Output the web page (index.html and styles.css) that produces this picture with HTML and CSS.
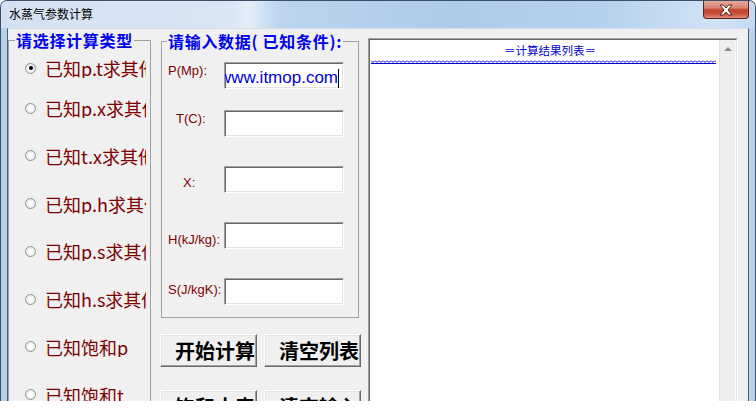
FILE: index.html
```html
<!DOCTYPE html>
<html>
<head lang="zh">
    <meta charset="UTF-8">
    <title>水蒸气参数计算</title>
    <link rel="stylesheet" href="styles.css">
</head>
<body>
<div class="window">
    <div class="titlebar">
        <span class="title">水蒸气参数计算</span>
        <div class="close">
            <svg width="16" height="12" viewBox="0 0 16 12">
                <polygon points="2,1 5.5,1 8,4 10.5,1 14,1 10,6 14,11 10.5,11 8,8 5.5,11 2,11 6,6" fill="#fff" stroke="#5a1f16" stroke-width="1"/>
            </svg>
        </div>
    </div>
    <div class="client">
        <!-- 计算类型 -->
        <fieldset class="group typeGroup">
            <legend>请选择计算类型</legend>
            <label class="opt checked"><span class="radio"></span><span class="optText">已知p.t求其他</span></label>
            <label class="opt"><span class="radio"></span><span class="optText">已知p.x求其他</span></label>
            <label class="opt"><span class="radio"></span><span class="optText">已知t.x求其他</span></label>
            <label class="opt"><span class="radio"></span><span class="optText">已知p.h求其他</span></label>
            <label class="opt"><span class="radio"></span><span class="optText">已知p.s求其他</span></label>
            <label class="opt"><span class="radio"></span><span class="optText">已知h.s求其他</span></label>
            <label class="opt"><span class="radio"></span><span class="optText">已知饱和p</span></label>
            <label class="opt"><span class="radio"></span><span class="optText">已知饱和t</span></label>
        </fieldset>
        <!-- 输入数据 -->
        <div class="middle">
            <fieldset class="group inputGroup">
                <legend>请输入数据( 已知条件):</legend>
                <div class="field fP"><span class="lbl">P(Mp):</span><div class="box"><span class="val">www.itmop.com</span><i class="caret"></i></div></div>
                <div class="field fT"><span class="lbl">T(C):</span><div class="box"></div></div>
                <div class="field fX"><span class="lbl">X:</span><div class="box"></div></div>
                <div class="field fH"><span class="lbl">H(kJ/kg):</span><div class="box"></div></div>
                <div class="field fS"><span class="lbl">S(J/kgK):</span><div class="box"></div></div>
            </fieldset>
            <div class="btns">
                <button class="btn">开始计算</button>
                <button class="btn">清空列表</button>
            </div>
            <div class="btns">
                <button class="btn">饱和水表</button>
                <button class="btn">清空输入</button>
            </div>
        </div>
        <!-- 结果列表 -->
        <div class="listbox">
            <div class="listInner">
                <div class="listBody">
                    <div class="listTitle">＝计算结果列表＝</div>
                    <svg class="wave" width="345" height="4">
                        <defs>
                            <pattern id="zig" width="4" height="4" patternUnits="userSpaceOnUse">
                                <path d="M0 0.5 L2 2.5 L4 0.5" fill="none" stroke="#0000d0" stroke-width="1"/>
                            </pattern>
                        </defs>
                        <rect width="345" height="3" fill="url(#zig)"/>
                        <rect y="3" width="345" height="1" fill="#0000d0"/>
                    </svg>
                </div>
                <div class="scroll"><div class="scrollUp"></div></div>
            </div>
        </div>
    </div>
</div>
</body>
</html>
```

FILE: styles.css
```css
*{
    margin: 0;
    padding: 0;
    box-sizing: border-box;
}
body{
    background: #fff;
    font-family: "Noto Sans CJK SC", sans-serif;
}
.window{
    width: 756px;
    height: 401px;
    background: #b9d1ea;
    border: 1px solid #3b4f66;
    border-bottom: none;
    border-radius: 7px 7px 0 0;
    overflow: hidden;
    display: flex;
    flex-direction: column;
}
.titlebar{
    height: 27px;
    flex: none;
    display: flex;
    justify-content: space-between;
    background: linear-gradient(90deg, #d3e2f2 0%, #d9e6f4 30%, #e3edf8 33%, #bcd4ee 37%, #aecbea 60%, #b6d1ed 80%, #d2e3f5 95%, #c4daf2 100%);
}
.title{
    font-size: 12px;
    line-height: 25px;
    padding-left: 8px;
    color: #000;
}
.close{
    width: 46px;
    height: 18px;
    margin-right: 6px;
    border: 1px solid #5a2720;
    border-top: none;
    border-radius: 0 0 4px 4px;
    background: linear-gradient(#e8a89c 0%, #d98574 40%, #c2452f 52%, #c9503a 75%, #e08b78 100%);
    display: flex;
    align-items: center;
    justify-content: center;
}
.client{
    flex: 1;
    margin: 0 6px;
    background: #f0f0f0;
    border: 1px solid #4a5d73;
    border-top-color: #cfdbe8;
    border-bottom: none;
    display: flex;
    align-items: flex-start;
    overflow: hidden;
}
.group{
    border: 1px solid #a0a0a0;
    min-width: 0;
}
.group legend{
    font-size: 16px;
    font-weight: bold;
    color: #0000f0;
    letter-spacing: 0.7px;
    padding: 0 1px;
}
.typeGroup{
    width: 143px;
    height: 420px;
    margin-top: 2px;
    flex: none;
}
.typeGroup legend{
    line-height: 18px;
    margin-left: 6px;
}
.opt{
    display: flex;
    align-items: center;
    height: 20px;
    padding-left: 16px;
    margin-top: 27.8px;
}
.opt:nth-of-type(1){
    margin-top: 9px;
}
.opt:nth-of-type(2){
    margin-top: 20px;
}
.radio{
    width: 11px;
    height: 11px;
    flex: none;
    border: 1px solid #8e8f8f;
    border-radius: 50%;
    background: radial-gradient(circle, #fff 20%, #dedede 100%);
    display: grid;
    place-items: center;
}
.checked .radio::after{
    content: "";
    width: 4px;
    height: 4px;
    border-radius: 50%;
    background: #000;
}
.optText{
    margin-left: 9px;
    width: 101px;
    overflow: hidden;
    white-space: nowrap;
    font-size: 18px;
    line-height: 20px;
    color: #800000;
}
.middle{
    width: 201px;
    margin-left: 9px;
    flex: none;
}
.inputGroup{
    width: 198px;
    margin: 2px 0 0 1px;
    padding: 0 14px 12px 0;
}
.inputGroup legend{
    line-height: 20px;
    margin-left: 5px;
}
.field{
    display: flex;
    align-items: flex-start;
    margin-top: 29px;
}
.fP{
    margin-top: 11px;
}
.fT{
    margin-top: 21px;
}
.lbl{
    font: 13px/15px "Liberation Sans", sans-serif;
    color: #800000;
    white-space: nowrap;
}
.fP .lbl{ margin: 1px 0 0 6px; }
.fT .lbl{ margin: 1px 0 0 14px; }
.fX .lbl{ margin: 9px 0 0 21px; }
.fH .lbl{ margin: 10px 0 0 6px; }
.fS .lbl{ margin: 4px 0 0 6px; }
.box{
    width: 120px;
    height: 27px;
    flex: none;
    margin-left: auto;
    background: #fff;
    border: 1px solid;
    border-color: #a0a0a0 #fff #fff #a0a0a0;
    box-shadow: inset 1px 1px #696969, inset -1px -1px #e3e3e3;
    overflow: hidden;
    white-space: nowrap;
    padding: 1px 0 0 2px;
}
.val{
    font: 17px/22px "Liberation Sans", sans-serif;
    color: #0000e0;
    margin-left: -8px;
}
.caret{
    display: inline-block;
    width: 1px;
    height: 19px;
    background: #000;
    vertical-align: middle;
}
.btns{
    display: flex;
    gap: 7px;
    margin-top: 16px;
}
.btns + .btns{
    margin-top: 23px;
}
.btn{
    width: 97px;
    height: 33px;
    flex: none;
    background: #f0f0f0;
    border: 1px solid;
    border-color: #fff #696969 #696969 #fff;
    box-shadow: inset -1px -1px #a0a0a0, inset 1px 1px #e3e3e3;
    font: bold 20px/31px "Noto Sans CJK SC", sans-serif;
    color: #000;
    text-align: right;
    padding: 0 1px 0 0;
    white-space: nowrap;
    overflow: hidden;
}
.listbox{
    width: 370px;
    height: 400px;
    margin: 9px 0 0 7px;
    flex: none;
    border: 1px solid;
    border-color: #a0a0a0 #fff #fff #a0a0a0;
}
.listInner{
    height: 100%;
    display: flex;
    border: 1px solid;
    border-color: #696969 #e3e3e3 #e3e3e3 #696969;
}
.listBody{
    flex: 1;
    background: #fff;
}
.listTitle{
    font-size: 11.5px;
    line-height: 14px;
    color: #0000d0;
    text-align: center;
    padding: 3px 0 0 11px;
}
.wave{
    display: block;
    margin: 3px 0 0 1px;
}
.scroll{
    width: 17px;
    flex: none;
    background: #eeeeee;
    border-left: 1px solid #e2e2e2;
    border-right: 1px solid #fafafa;
}
.scrollUp{
    height: 17px;
    display: flex;
    align-items: center;
    justify-content: center;
}
.scrollUp::before{
    content: "";
    border-left: 4px solid transparent;
    border-right: 4px solid transparent;
    border-bottom: 4px solid #8b8b8b;
}
```
